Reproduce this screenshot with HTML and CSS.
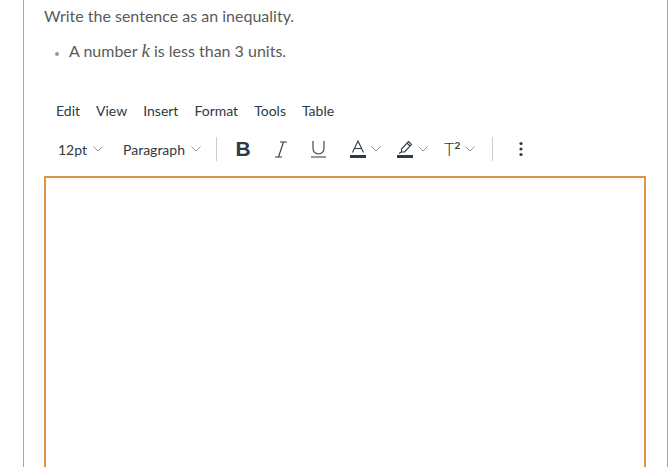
FILE: index.html
```html
<!DOCTYPE html>
<html lang="en">
<head>
  <meta charset="UTF-8" />
  <title>Question</title>
  <link rel="stylesheet" href="styles.css">
</head>
<body>
  <div class="question">
    <p class="prompt">Write the sentence as an inequality.</p>
    <ul class="items">
      <li>A number <span class="var">k</span> is less than 3 units.</li>
    </ul>

    <div class="editor">
      <div class="menubar">
        <span>Edit</span>
        <span>View</span>
        <span>Insert</span>
        <span>Format</span>
        <span>Tools</span>
        <span>Table</span>
      </div>
      <div class="toolbar">
        <div class="group first">
          <span class="drop">12pt <svg class="chev" width="10" height="6" viewBox="0 0 10 6"><path d="M.5.5L5 5 9.5.5"/></svg></span>
          <span class="drop">Paragraph <svg class="chev" width="10" height="6" viewBox="0 0 10 6"><path d="M.5.5L5 5 9.5.5"/></svg></span>
        </div>
        <div class="group">
          <span class="btn bold">B</span>
          <span class="btn">
            <svg class="ico" width="12" height="17" viewBox="0 0 12 17"><path d="M5 1h7M0 16h7M8.5 1L3.5 16"/></svg>
          </span>
          <span class="btn">
            <svg class="ico" width="15" height="18" viewBox="0 0 15 18"><path d="M2 1v7.5a5.5 5.5 0 0 0 11 0V1M0 17h15"/></svg>
          </span>
          <span class="btn split">
            <svg class="ico" width="16" height="18" viewBox="0 0 16 18"><path d="M2.5 12.5L8 1 13.5 12.5M4.3 8.5h7.4"/><rect class="fill" x="0" y="15" width="16" height="3"/></svg>
            <svg class="chev" width="10" height="6" viewBox="0 0 10 6"><path d="M.5.5L5 5 9.5.5"/></svg>
          </span>
          <span class="btn split">
            <svg class="ico" width="16" height="18" viewBox="0 0 16 18"><path d="M11.5 1.5l3 3-7 7.5H4.5V9zM10 3l3 3M4.5 12l-2.5 1.5"/><rect class="fill" x="0" y="15" width="16" height="3"/></svg>
            <svg class="chev" width="10" height="6" viewBox="0 0 10 6"><path d="M.5.5L5 5 9.5.5"/></svg>
          </span>
          <span class="btn split">
            <span class="sup">T<sup>2</sup></span>
            <svg class="chev" width="10" height="6" viewBox="0 0 10 6"><path d="M.5.5L5 5 9.5.5"/></svg>
          </span>
        </div>
        <div class="group last">
          <span class="btn more">
            <svg width="4" height="16" viewBox="0 0 4 16"><circle cx="2" cy="2.5" r="1.6"/><circle cx="2" cy="8" r="1.6"/><circle cx="2" cy="13.5" r="1.6"/></svg>
          </span>
        </div>
      </div>
      <div class="area"></div>
    </div>
  </div>
</body>
</html>
```

FILE: styles.css
```css
* { box-sizing: border-box; }

body {
  margin: 0;
  font-family: Lato, "Open Sans", sans-serif;
  background: #fff;
  height: 467px;
  overflow: hidden;
}

.question {
  margin-left: 23px;
  height: 467px;
  border-left: 1px solid #a5a5a5;
  border-right: 1px solid #a5a5a5;
  padding: 4px 21px 0 20px;
}

.prompt {
  margin: 0;
  font-size: 16px;
  line-height: 24px;
  color: #5a5a5a;
}

.items {
  margin: 11px 0 0;
  padding-left: 25px;
  font-size: 16px;
  line-height: 24px;
  color: #5a5a5a;
}

.items li::marker {
  color: #999;
  font-size: 11px;
}

.var {
  font-family: "Liberation Serif", serif;
  font-style: italic;
  font-size: 19px;
}

.editor {
  margin-top: 38px;
}

.menubar {
  display: flex;
  padding-left: 4px;
  font-size: 14px;
  line-height: 20px;
  color: #2d3b45;
}

.menubar span {
  padding: 0 8px;
}

.toolbar {
  display: flex;
  align-items: center;
  height: 24px;
  margin-top: 16px;
  font-size: 14px;
  color: #2d3b45;
}

.group {
  display: flex;
  align-items: center;
  border-right: 1px solid #c7cdd1;
  height: 24px;
}

.group.first {
  padding-left: 14px;
  padding-right: 15px;
}

.group.last {
  border-right: none;
  padding-left: 26px;
}

.drop {
  display: flex;
  align-items: center;
  gap: 6px;
}

.drop + .drop {
  margin-left: 20px;
}

.chev {
  fill: none;
  stroke: #8b969e;
  stroke-width: 1;
}

.ico {
  fill: none;
  stroke: #2d3b45;
  stroke-width: 1.1;
}

.ico .fill {
  fill: #2d3b45;
  stroke: none;
}

.btn {
  display: flex;
  align-items: center;
  justify-content: center;
  width: 38px;
  height: 24px;
}

.btn.bold {
  margin-left: 7px;
  font-family: "Liberation Sans", sans-serif;
  font-weight: 700;
  font-size: 21px;
}

.btn.split {
  justify-content: flex-start;
  width: 47px;
  padding-left: 12px;
  gap: 5px;
}

.btn.split:last-child {
  margin-right: 13px;
}

.sup {
  font-size: 18px;
  font-weight: 300;
  line-height: 1;
}

.sup sup {
  font-size: 10px;
  font-weight: 700;
  vertical-align: 7px;
}

.more {
  width: auto;
}

.more circle {
  fill: #2d3b45;
}

.area {
  margin-top: 15px;
  height: 400px;
  border: 2px solid #dc9548;
  border-bottom: none;
}
```
